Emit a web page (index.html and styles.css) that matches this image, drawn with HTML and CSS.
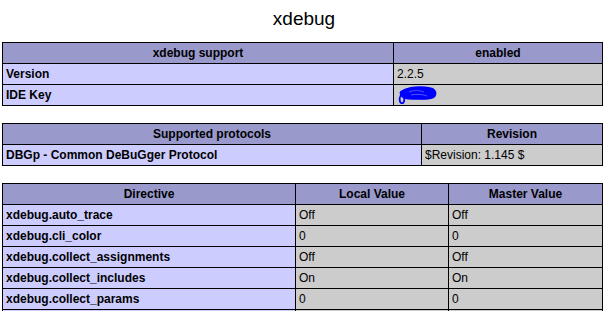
FILE: index.html
```html
<!DOCTYPE html>
<html lang="en">
<head>
  <meta charset="UTF-8">
  <meta name="viewport" content="width=device-width, initial-scale=1.0">
  <link rel="stylesheet" href="styles.css">
  <title>phpinfo() - xdebug</title>
</head>
<body>
  <div class="center">
    <h2 class="title">xdebug</h2>

    <table class="info info-support">
      <tr class="h"><th>xdebug support</th><th>enabled</th></tr>
      <tr><td class="e">Version</td><td class="v">2.2.5</td></tr>
      <tr>
        <td class="e">IDE Key</td>
        <td class="v">
          <!-- key scribbled out -->
          <svg class="scribble" width="40" height="18" viewBox="0 0 40 18">
            <path d="M5 5 C11 1, 24 0, 33 2 C39 3, 40 8, 37 11 C34 14, 24 13, 16 13 C10 13, 5 12, 4 9 C3 7, 3 6, 5 5 Z"
                  fill="#0000ff" stroke="#0000ff" stroke-width="1.5" stroke-linejoin="round"/>
            <path d="M5 8 C2 10, 2 15, 4 17 C6 18, 8 16, 7 11" fill="none" stroke="#0000ff" stroke-width="1.8"/>
            <path d="M12 6 C17 4, 22 4, 27 6 M14 9 C19 8, 25 8, 30 10" fill="none" stroke="#5050ff" stroke-width="1"/>
          </svg>
        </td>
      </tr>
    </table>

    <table class="info info-protocols">
      <tr class="h"><th>Supported protocols</th><th>Revision</th></tr>
      <tr><td class="e">DBGp - Common DeBuGger Protocol</td><td class="v">$Revision: 1.145 $</td></tr>
    </table>

    <table class="info info-directives">
      <tr class="h"><th>Directive</th><th>Local Value</th><th>Master Value</th></tr>
      <tr><td class="e">xdebug.auto_trace</td><td class="v">Off</td><td class="v">Off</td></tr>
      <tr><td class="e">xdebug.cli_color</td><td class="v">0</td><td class="v">0</td></tr>
      <tr><td class="e">xdebug.collect_assignments</td><td class="v">Off</td><td class="v">Off</td></tr>
      <tr><td class="e">xdebug.collect_includes</td><td class="v">On</td><td class="v">On</td></tr>
      <tr><td class="e">xdebug.collect_params</td><td class="v">0</td><td class="v">0</td></tr>
      <tr><td class="e">xdebug.collect_return</td><td class="v">Off</td><td class="v">Off</td></tr>
    </table>
  </div>
</body>
</html>
```

FILE: styles.css
```css
body {
  margin: 0;
  background-color: #ffffff;
  color: #000000;
  font-family: "Liberation Sans", Arial, sans-serif;
}

.title {
  margin: 0;
  padding-top: 8px;
  height: 34px;
  text-align: center;
  font-size: 19px;
  font-weight: normal;
  line-height: 22px;
}

.info {
  border-collapse: collapse;
  width: 601px;
  margin: 0 0 17px 2px;
  table-layout: fixed;
}

.info th,
.info td {
  border: 1px solid #000000;
  height: 20px;
  padding: 0 3px;
  font-size: 12px;
  line-height: 14px;
  vertical-align: middle;
  overflow: hidden;
  white-space: nowrap;
}

.h th {
  background-color: #9999cc;
  font-weight: bold;
  text-align: center;
}

.e {
  background-color: #ccccff;
  font-weight: bold;
  text-align: left;
}

.v {
  background-color: #cccccc;
  text-align: left;
  font-size: 11px;
}

.scribble {
  display: block;
}

.info-support th:first-child { width: 384px; }
.info-protocols th:first-child { width: 412px; }
.info-directives th:first-child { width: 286px; }
.info-directives th:nth-child(2) { width: 146px; }
```
